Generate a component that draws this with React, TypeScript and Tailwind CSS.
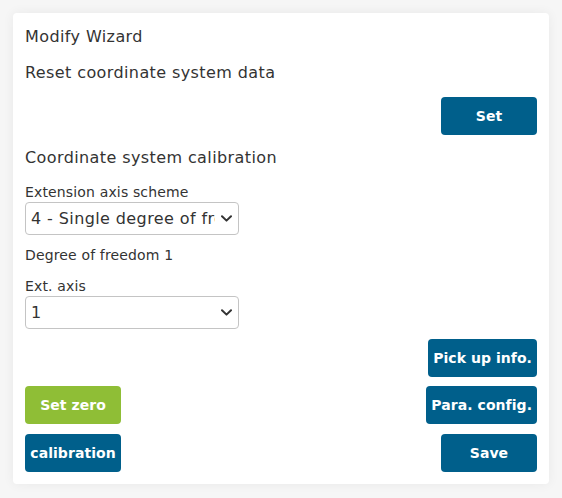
import React from "react";

function Chevron() {
  return (
    <svg width="11" height="7" viewBox="0 0 11 7" fill="none" className="shrink-0">
      <path d="M1 1.2 L5.5 5.6 L10 1.2" stroke="#333" strokeWidth="2" strokeLinecap="round" strokeLinejoin="round" />
    </svg>
  );
}

function FakeSelect({ value }: { value: string }) {
  return (
    <div className="flex h-[33px] w-[214px] items-center rounded-[4px] border border-[#c4c4c4] bg-white pl-[5px] pr-[6px]">
      <div className="flex-1 overflow-hidden whitespace-nowrap text-[16px] leading-[20px] tracking-[0.4px] text-[#333]">{value}</div>
      <div className="ml-[6px]"><Chevron /></div>
    </div>
  );
}

function Btn({ children, green }: { children: React.ReactNode; green?: boolean }) {
  return (
    <button
      className={
        green
          ? "flex h-[38px] min-w-[96px] items-center justify-center rounded-[4px] bg-[#8fbe36] px-[5px] text-[14px] font-bold tracking-[0.05px] text-white"
          : "flex h-[38px] min-w-[96px] items-center justify-center rounded-[4px] bg-[#005f8b] px-[5px] text-[14px] font-bold tracking-[0.05px] text-white"
      }
    >
      {children}
    </button>
  );
}

export default function App() {
  return (
    <div className="min-h-[498px] w-[562px] bg-[#f6f6f6] p-[13px]" style={{ fontFamily: '"DejaVu Sans", Verdana, sans-serif' }}>
      <div className="flex flex-col rounded-[4px] bg-white p-[12px] text-[#333] shadow-[0_0_12px_rgba(0,0,0,0.06)]">
        <div className="text-[16px] leading-[24px] tracking-[0.4px]">Modify Wizard</div>
        <div className="mt-[12px] text-[16px] leading-[24px] tracking-[0.4px]">Reset coordinate system data</div>
        <div className="mt-[12px] flex justify-end">
          <Btn>Set</Btn>
        </div>
        <div className="mt-[11px] text-[16px] leading-[24px] tracking-[0.4px]">Coordinate system calibration</div>
        <div className="mt-[12px] text-[14px] leading-[20px] tracking-[0.15px]">Extension axis scheme</div>
        <FakeSelect value="4 - Single degree of freedom" />
        <div className="mt-[10px] text-[14px] leading-[20px] tracking-[0.15px]">Degree of freedom 1</div>
        <div className="mt-[11px] text-[14px] leading-[20px] tracking-[0.15px]">Ext. axis</div>
        <FakeSelect value="1" />
        <div className="mt-[10px] flex justify-end">
          <Btn>Pick up info.</Btn>
        </div>
        <div className="mt-[9px] flex justify-between">
          <Btn green>Set zero</Btn>
          <Btn>Para. config.</Btn>
        </div>
        <div className="mt-[10px] flex justify-between">
          <Btn>calibration</Btn>
          <Btn>Save</Btn>
        </div>
      </div>
    </div>
  );
}
